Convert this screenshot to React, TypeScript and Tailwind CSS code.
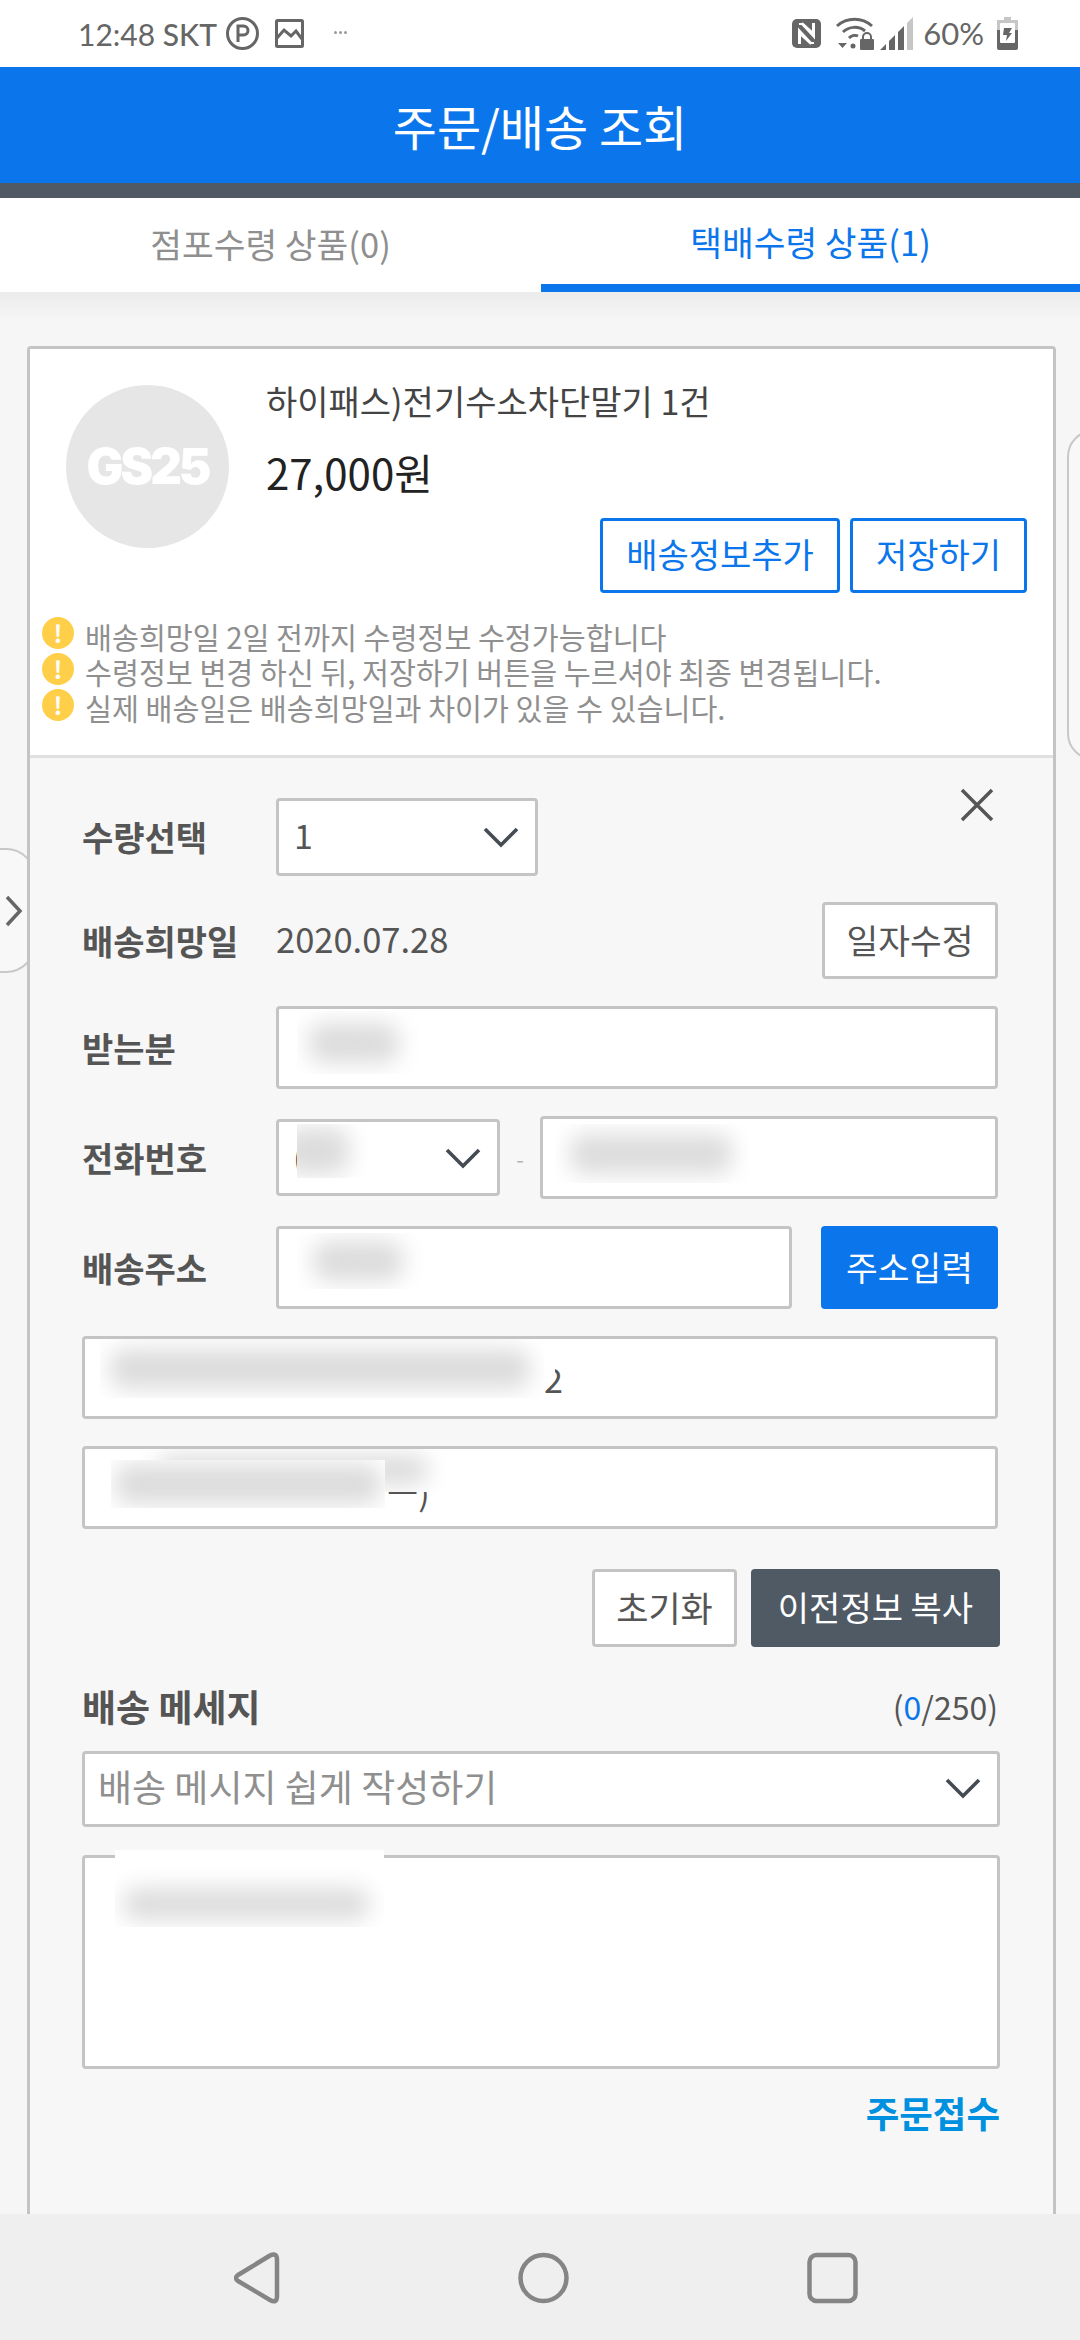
import React from "react";

const Chevron = ({ className }: { className: string }) => (
  <svg viewBox="0 0 36 22" className={className} fill="none" stroke="#444b52" strokeWidth="3.6">
    <path d="M2 3 L18 19 L34 3" />
  </svg>
);

const Blur = ({ className, inner }: { className: string; inner: string }) => (
  <div className={`absolute overflow-hidden bg-white ${className}`}>
    <div className={`absolute rounded-[14px] bg-[#dcdcdc] blur-[11px] ${inner}`} />
  </div>
);

const Warn = () => (
  <span className="flex h-[32px] w-[32px] shrink-0 items-center justify-center rounded-full bg-[#ffcf4a] text-[24px] leading-none font-bold text-white">!</span>
);

const Label = ({ children }: { children: React.ReactNode }) => (
  <span className="w-[194px] shrink-0 text-[34px] leading-none font-bold whitespace-nowrap text-[#555555]">{children}</span>
);

const boxClass = "relative rounded-[4px] border-[3px] border-[#c4c4c4] bg-white";

export default function App() {
  return (
    <div className="flex h-[2340px] w-[1080px] flex-col overflow-hidden bg-[#f6f6f6] font-['Noto_Sans_CJK_KR','Noto_Sans',sans-serif]">
      {/* status bar */}
      <div className="flex h-[67px] shrink-0 items-center bg-white pr-[62px] pl-[78px] text-[#666666]">
        <span className="font-['Lato',sans-serif] text-[30px] leading-none whitespace-nowrap">12:48 <span className="font-medium">SKT</span></span>
        <svg viewBox="0 0 33 33" className="ml-[9px] h-[33px] w-[33px]" fill="none" stroke="#666" strokeWidth="3">
          <circle cx="16.5" cy="16.5" r="15" />
          <path d="M12 25V9h5.5a4.5 4.5 0 0 1 0 9H12" />
        </svg>
        <svg viewBox="0 0 29 29" className="ml-[16px] h-[29px] w-[29px]" fill="none" stroke="#666" strokeWidth="3">
          <rect x="1.5" y="1.5" width="26" height="26" rx="1" />
          <path d="M2 19 L9 11 L16 17 L21 12 L27 20" />
        </svg>
        <span className="mb-[2px] ml-[30px] flex gap-[2px]">
          <i className="h-[3px] w-[3px] rounded-full bg-[#999]" />
          <i className="h-[3px] w-[3px] rounded-full bg-[#999]" />
          <i className="h-[3px] w-[3px] rounded-full bg-[#999]" />
        </span>
        <span className="flex-1" />
        <svg viewBox="0 0 29 29" className="h-[29px] w-[29px]">
          <rect width="29" height="29" rx="5" fill="#666" />
          <path d="M7 5h3l12 13V5h-1v9L10 4M22 24h-3L7 11v13h1v-9l11 10" fill="none" stroke="#fff" strokeWidth="2" />
        </svg>
        <svg viewBox="0 0 39 33" className="ml-[14px] h-[33px] w-[39px]" fill="none" stroke="#666" strokeWidth="3">
          <path d="M2 9 C12 0 27 0 37 9" />
          <path d="M8 15 C14 9 24 9 30 14" />
          <path d="M14 21 C17 18 21 18 23 19" />
          <circle cx="18" cy="29" r="2.5" fill="#666" stroke="none" />
          <path d="M3 26h9l-4.5 5z" fill="#666" stroke="none" />
          <rect x="25" y="22" width="14" height="11" rx="1" fill="#666" stroke="none" />
          <path d="M28 23v-3a4 4 0 0 1 8 0v3" strokeWidth="2" />
        </svg>
        <svg viewBox="0 0 33 33" className="ml-[6px] h-[33px] w-[33px]">
          <path d="M0 33 L6 27 V33Z M9 33 V24 L15 18 V33Z M18 33 V15 L24 9 V33Z" fill="#666" />
          <path d="M27 33 V6 L33 0 V33Z" fill="#c6c6c6" />
        </svg>
        <span className="ml-[10px] font-['Lato',sans-serif] text-[31px] leading-none">60%</span>
        <svg viewBox="0 0 21 33" className="ml-[13px] h-[33px] w-[21px]">
          <path d="M7 0h7v3h7v12H0V3h7z" fill="#c6c6c6" />
          <path d="M0 13h21v18a2 2 0 0 1-2 2H2a2 2 0 0 1-2-2z" fill="#666" />
          <rect x="3" y="6" width="15" height="20" rx="1" fill="#fff" />
          <path d="M7 11h8l-3 5h3l-6 8 1-6H6z" fill="#666" />
        </svg>
      </div>

      {/* header */}
      <div className="flex h-[116px] shrink-0 items-center justify-center bg-[#0b76ec] text-[48px] leading-none text-white">주문/배송 조회</div>
      <div className="h-[15px] shrink-0 bg-[#4f5a65]" />

      {/* tabs */}
      <div className="flex h-[94px] shrink-0 bg-white text-[34.5px] leading-none">
        <div className="flex w-[541px] items-center justify-center pb-[4px] text-[#8f8f8f]">점포수령 상품(0)</div>
        <div className="flex flex-1 items-center justify-center border-b-[8px] border-[#0b76ec] text-[#0b76ec]">택배수령 상품(1)</div>
      </div>

      {/* content */}
      <div className="relative min-h-0 flex-1 overflow-hidden bg-gradient-to-b from-[#ebebeb] to-[#f6f6f6] to-[28px] pt-[54px]">
        {/* side handles */}
        <div className="absolute top-[556px] left-[-30px] flex h-[125px] w-[66px] items-center justify-end rounded-[30px] border-2 border-[#c8c8c8] bg-[#f8f8f8] pr-[10px]">
          <svg viewBox="0 0 20 32" className="h-[32px] w-[20px]" fill="none" stroke="#666" strokeWidth="3.5"><path d="M3 2 L16 16 L3 30" /></svg>
        </div>
        <div className="absolute top-[138px] right-[-40px] h-[330px] w-[53px] rounded-[30px] border-2 border-[#c8c8c8] bg-[#f8f8f8]" />

        <div className="relative mr-[24px] ml-[27px] rounded-t-[4px] border-x-[3px] border-t-[3px] border-[#c4c4c4] bg-[#f7f7f7]">
          {/* product summary */}
          <div className="h-[409px] border-b-[3px] border-[#e0e0e0] bg-white pt-[36px]">
            <div className="flex pl-[36px]">
              <div className="flex h-[163px] w-[163px] shrink-0 items-center justify-center rounded-full bg-[#e6e6e6] font-['Inter',sans-serif] text-[49px] font-black tracking-[-3px] text-white">GS25</div>
              <div className="mt-[-4px] ml-[37px]">
                <p className="text-[34px] leading-[40px] whitespace-nowrap text-[#444444]">하이패스)전기수소차단말기 1건</p>
                <p className="mt-[28px] text-[42px] leading-[46px] whitespace-nowrap text-[#222222]">27,000원</p>
              </div>
            </div>
            <div className="mt-[-30px] flex justify-end gap-[10px] pr-[26px]">
              <button className="h-[75px] w-[240px] rounded-[4px] border-[3px] border-[#0b76ec] pb-[3px] text-[34px] leading-none whitespace-nowrap text-[#0b76ec]">배송정보추가</button>
              <button className="h-[75px] w-[177px] rounded-[4px] border-[3px] border-[#0b76ec] pb-[3px] text-[34px] leading-none whitespace-nowrap text-[#0b76ec]">저장하기</button>
            </div>
            <div className="mt-[22px] flex flex-col pl-[12px] text-[29.3px] leading-[36px] whitespace-nowrap text-[#8f8f8f]">
              <div className="flex items-center gap-[11px]"><Warn /><span className="relative top-[3px]">배송희망일 2일 전까지 수령정보 수정가능합니다</span></div>
              <div className="flex items-center gap-[11px]"><Warn /><span className="relative top-[2px]">수령정보 변경 하신 뒤, 저장하기 버튼을 누르셔야 최종 변경됩니다.</span></div>
              <div className="flex items-center gap-[11px]"><Warn /><span className="relative top-[2px]">실제 배송일은 배송희망일과 차이가 있을 수 있습니다.</span></div>
            </div>
          </div>

          {/* form */}
          <div className="relative flex flex-col pt-[40px] pr-[55px] pl-[52px]">
            <svg viewBox="0 0 34 34" className="absolute top-[30px] right-[59px] h-[34px] w-[34px]" fill="none" stroke="#555" strokeWidth="3.5"><path d="M2 2 L32 32 M32 2 L2 32" /></svg>

            <div className="flex items-center">
              <Label>수량선택</Label>
              <div className={`${boxClass} flex h-[78px] w-[262px] items-center justify-between pr-[16px] pl-[15px] text-[34px] leading-none text-[#555555]`}>
                <span className="pb-[4px]">1</span><Chevron className="h-[22px] w-[36px]" />
              </div>
            </div>

            <div className="mt-[26px] flex h-[77px] items-center">
              <Label>배송희망일</Label>
              <span className="pb-[5px] text-[34.5px] leading-none text-[#555555]">2020.07.28</span>
              <button className={`${boxClass} ml-auto h-[77px] w-[176px] pb-[3px] text-[34.5px] leading-none whitespace-nowrap text-[#555555]`}>일자수정</button>
            </div>

            <div className="mt-[27px] flex items-center">
              <Label>받는분</Label>
              <div className={`${boxClass} h-[83px] flex-1`}>
                <Blur className="top-[2px] left-[18px] h-[63px] w-[122px]" inner="top-[12px] left-[12px] h-[40px] w-[90px]" />
              </div>
            </div>

            <div className="mt-[27px] flex items-center">
              <Label>전화번호</Label>
              <div className={`${boxClass} flex h-[77px] w-[224px] items-center justify-end pr-[16px]`}>
                <span className="absolute top-[10px] left-[14px] text-[34px] leading-[50px] text-[#555555] antialiased">(</span>
                <Blur className="top-[2px] left-[18px] h-[54px] w-[72px]" inner="top-[4px] left-[-14px] h-[46px] w-[66px]" />
                <Chevron className="h-[22px] w-[36px]" />
              </div>
              <span className="flex w-[40px] justify-center text-[22px] leading-none text-[#b5b5b5]">-</span>
              <div className={`${boxClass} h-[83px] flex-1`}>
                <Blur className="top-[5px] left-[13px] h-[59px] w-[193px]" inner="top-[10px] left-[14px] h-[40px] w-[162px]" />
              </div>
            </div>

            <div className="mt-[27px] flex items-center">
              <Label>배송주소</Label>
              <div className={`${boxClass} h-[83px] w-[516px]`}>
                <Blur className="top-[4px] left-[18px] h-[56px] w-[127px]" inner="top-[8px] left-[16px] h-[40px] w-[90px]" />
              </div>
              <button className="ml-auto h-[83px] w-[177px] rounded-[4px] bg-[#0b76ec] pb-[3px] text-[34.5px] leading-none whitespace-nowrap text-white">주소입력</button>
            </div>

            <div className={`${boxClass} mt-[27px] h-[83px]`}>
              <span className="absolute top-[20px] left-[459px] text-[34px] leading-[40px] text-[#555555]">2</span>
              <Blur className="top-[0px] left-[15px] h-[59px] w-[444px]" inner="top-[10px] left-[10px] h-[40px] w-[420px]" />
              <div className="absolute top-[6px] left-[459px] h-[32px] w-[11px] bg-white" />
            </div>

            <div className={`${boxClass} mt-[27px] h-[83px]`}>
              <span className="absolute top-[23px] left-[302px] text-[34px] leading-[40px] text-[#555555]">ㅡ)</span>
              <Blur className="top-[0px] left-[53px] h-[43px] w-[317px]" inner="top-[6px] left-[20px] h-[30px] w-[270px]" />
              <Blur className="top-[11px] left-[26px] h-[48px] w-[274px]" inner="top-[4px] left-[4px] h-[40px] w-[266px]" />
            </div>

            <div className="mt-[40px] mr-[-2px] flex justify-end gap-[14px]">
              <button className={`${boxClass} h-[78px] w-[145px] pb-[3px] text-[35px] leading-none whitespace-nowrap text-[#555555]`}>초기화</button>
              <button className="h-[78px] w-[249px] rounded-[4px] bg-[#4f5a65] pb-[3px] text-[34px] leading-none whitespace-nowrap text-white">이전정보 복사</button>
            </div>

            <div className="mt-[34px] flex h-[50px] items-center justify-between">
              <span className="text-[37px] leading-none font-bold text-[#555555]">배송 메세지</span>
              <span className="text-[32px] leading-none text-[#555555]">(<span className="text-[#0b76ec]">0</span>/250)</span>
            </div>

            <div className={`${boxClass} mt-[20px] mr-[-2px] flex h-[76px] items-center justify-between pr-[16px] pl-[13px] text-[37px] leading-none text-[#8f8f8f]`}>
              <span className="pb-[5px]">배송 메시지 쉽게 작성하기</span><Chevron className="mb-[3px] h-[22px] w-[36px]" />
            </div>

            <div className={`${boxClass} mt-[28px] mr-[-2px] h-[214px]`}>
              <Blur className="top-[-8px] left-[30px] h-[77px] w-[269px]" inner="top-[38px] left-[8px] h-[32px] w-[246px]" />
            </div>

            <div className="mt-[26px] mr-[-2px] text-right text-[36.5px] leading-[36px] font-bold text-[#0090e0]">주문접수</div>
            <div className="h-[200px]" />
          </div>
        </div>
      </div>

      {/* nav bar */}
      <div className="flex h-[126px] shrink-0 items-start justify-center gap-[238px] bg-[#efefef] pt-[38px] pl-[12px]">
        <svg viewBox="0 0 46 52" className="h-[52px] w-[46px]" fill="none" stroke="#858585" strokeWidth="4.5" strokeLinejoin="round">
          <path d="M4 23 L36 3.5 Q43 0 43 8 V44 Q43 52 36 48 L4 29 Q0 26 4 23 Z" />
        </svg>
        <svg viewBox="0 0 51 52" className="h-[52px] w-[51px]" fill="none" stroke="#858585" strokeWidth="4.5">
          <circle cx="25.5" cy="26" r="23" />
        </svg>
        <svg viewBox="0 0 51 52" className="h-[52px] w-[51px]" fill="none" stroke="#858585" strokeWidth="4.5">
          <rect x="2.5" y="3" width="46" height="46" rx="7" />
        </svg>
      </div>
    </div>
  );
}
